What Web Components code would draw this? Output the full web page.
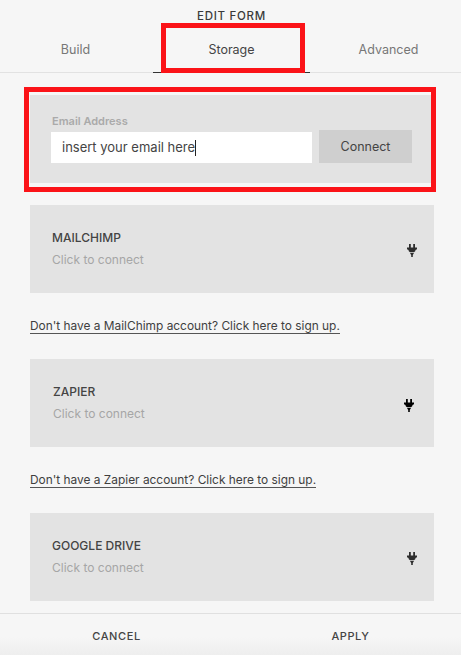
<!doctype html>
<html>
<head>
<meta charset="utf-8">
<style>
  html, body { margin: 0; height: 100%; }
  body {
    width: 461px;
    height: 655px;
    overflow: hidden;
    background: #f6f6f6;
    font-family: Inter, "Liberation Sans", sans-serif;
    color: #3a3a3a;
  }
</style>
</head>
<body>
<edit-form>
  <form-tabs slot="header" title-text="EDIT FORM">
    <form-tab style="padding-right:2px">Build</form-tab>
    <form-tab active>Storage</form-tab>
    <form-tab style="padding-left:6px">Advanced</form-tab>
  </form-tabs>
  <email-connect></email-connect>
  <storage-card name="MAILCHIMP"></storage-card>
  <signup-link>Don't have a MailChimp account? Click here to sign up.</signup-link>
  <storage-card name="ZAPIER" style="--text-x:23px;--icon-right:20px;--icon-y:1px;--icon-color:#000"></storage-card>
  <signup-link>Don't have a Zapier account? Click here to sign up.</signup-link>
  <storage-card name="GOOGLE DRIVE"></storage-card>
  <form-footer slot="footer"></form-footer>
</edit-form>

<script>
class EditForm extends HTMLElement {
  constructor() {
    super();
    this.attachShadow({ mode: "open" }).innerHTML = `
      <style>
        :host { display: flex; flex-direction: column; height: 655px; }
        main { flex: 1; min-height: 0; display: flex; flex-direction: column; padding-top: 14px; }
      </style>
      <slot name="header"></slot>
      <main><slot></slot></main>
      <slot name="footer"></slot>`;
  }
}

class FormTabs extends HTMLElement {
  constructor() {
    super();
    this.attachShadow({ mode: "open" }).innerHTML = `
      <style>
        :host { display: block; height: 73px; box-sizing: border-box; border-bottom: 1px solid #e2e2e2; }
        h1 {
          margin: 0;
          padding: 9px 0 0 2px;
          height: 24px;
          box-sizing: border-box;
          text-align: center;
          font-size: 11.5px;
          line-height: 15px;
          font-weight: 500;
          letter-spacing: 0.7px;
          color: #3a3a3a;
        }
        nav { display: grid; grid-template-columns: 153px 157px 151px; height: 49px; }
      </style>
      <h1></h1>
      <nav><slot></slot></nav>`;
    this.shadowRoot.querySelector("h1").textContent = this.getAttribute("title-text");
  }
}

class FormTab extends HTMLElement {
  constructor() {
    super();
    this.attachShadow({ mode: "open" }).innerHTML = `
      <style>
        :host {
          display: flex;
          align-items: center;
          justify-content: center;
          position: relative;
          box-sizing: border-box;
          height: 49px;
          padding-top: 2px;
          font-size: 12.5px;
          color: #777;
          border-bottom: 1px solid transparent;
        }
        :host([active]) { color: #444; border-bottom-color: #333; }
        .mark { display: none; }
        :host([active]) .mark {
          display: block;
          position: absolute;
          left: 8px;
          top: -1px;
          width: 144px;
          height: 50px;
          box-sizing: border-box;
          border: 5px solid #fb1318;
        }
      </style>
      <slot></slot><div class="mark"></div>`;
  }
}

class EmailConnect extends HTMLElement {
  constructor() {
    super();
    this.attachShadow({ mode: "open" }).innerHTML = `
      <style>
        :host {
          display: block;
          flex: none;
          width: 412px;
          height: 105px;
          box-sizing: border-box;
          margin: 0 0 13px 24px;
          border: 5px solid #fb1318;
          padding: 3px 0 0 1px;
        }
        .panel {
          height: 88px;
          width: 401px;
          box-sizing: border-box;
          background: #e3e3e3;
          padding: 19px 19px 0 21px;
        }
        label { display: block; height: 16px; font-size: 11px; line-height: 14px; font-weight: 600; color: #aaa; padding-left: 1px; }
        .row { display: flex; align-items: flex-end; gap: 7px; height: 33px; }
        .field {
          width: 261px;
          height: 31px;
          box-sizing: border-box;
          background: #fff;
          padding-left: 11px;
          font-size: 13px;
          line-height: 31px;
          color: #444;
          display: flex;
          align-items: center;
        }
        .caret { width: 1px; height: 16px; background: #222; }
        button {
          width: 93px;
          height: 33px;
          border: 0;
          padding: 0;
          background: #cfcfcf;
          font: inherit;
          font-size: 12.5px;
          color: #444;
        }
      </style>
      <div class="panel">
        <label>Email Address</label>
        <div class="row">
          <div class="field">insert your email here<span class="caret"></span></div>
          <button>Connect</button>
        </div>
      </div>`;
  }
}

class StorageCard extends HTMLElement {
  constructor() {
    super();
    this.attachShadow({ mode: "open" }).innerHTML = `
      <style>
        :host {
          display: flex;
          align-items: center;
          justify-content: space-between;
          width: 404px;
          height: 88px;
          box-sizing: border-box;
          flex: none;
          margin-left: 30px;
          background: #e3e3e3;
          padding: 0 var(--icon-right, 17px) 0 var(--text-x, 22px);
        }
        .name { font-size: 12px; line-height: 16px; font-weight: 500; color: #444; margin-bottom: 6px; }
        .sub { font-size: 12px; line-height: 16px; color: #a6a6a6; }
        svg {
          width: 10px;
          height: 13px;
          display: block;
          fill: var(--icon-color, #2e2e2e);
          transform: translateY(calc(var(--icon-y, 0px) + 1px));
        }
      </style>
      <div>
        <div class="name"></div>
        <div class="sub">Click to connect</div>
      </div>
      <svg viewBox="0 0 10 13">
        <path d="M2 0h1.8v3.5H2zM6.2 0H8v3.5H6.2zM0 3.5h10v1.8L8.4 6v1L7 8.2H3L1.6 7V6L0 5.3zM3 9h4L5.8 11v2H4.2v-2z"/>
      </svg>`;
    this.shadowRoot.querySelector(".name").textContent = this.getAttribute("name");
  }
}

class SignupLink extends HTMLElement {
  constructor() {
    super();
    this.attachShadow({ mode: "open" }).innerHTML = `
      <style>
        :host { display: block; flex: none; height: 66px; box-sizing: border-box; margin-left: 30px; padding-top: 25px; }
        a {
          display: block;
          width: fit-content;
          font-size: 11.9px;
          line-height: 15px;
          color: #3f3f3f;
          border-bottom: 1px solid #555;
        }
      </style>
      <a><slot></slot></a>`;
  }
}

class FormFooter extends HTMLElement {
  constructor() {
    super();
    this.attachShadow({ mode: "open" }).innerHTML = `
      <style>
        :host {
          display: grid;
          grid-template-columns: 233px 1fr;
          height: 42px;
          box-sizing: border-box;
          border-top: 1px solid #e0e0e0;
          background: linear-gradient(#f6f6f6 55%, #eeeeee);
        }
        div {
          display: flex;
          align-items: center;
          justify-content: center;
          padding-top: 2px;
          font-size: 11px;
          font-weight: 500;
          letter-spacing: 0.6px;
          color: #444;
        }
        div:first-child { border-right: 1px solid #e0e0e0; padding-right: 11px; }
        div:last-child { padding-left: 7px; }
      </style>
      <div>CANCEL</div>
      <div>APPLY</div>`;
  }
}

customElements.define("edit-form", EditForm);
customElements.define("form-tabs", FormTabs);
customElements.define("form-tab", FormTab);
customElements.define("email-connect", EmailConnect);
customElements.define("storage-card", StorageCard);
customElements.define("signup-link", SignupLink);
customElements.define("form-footer", FormFooter);
</script>
</body>
</html>
